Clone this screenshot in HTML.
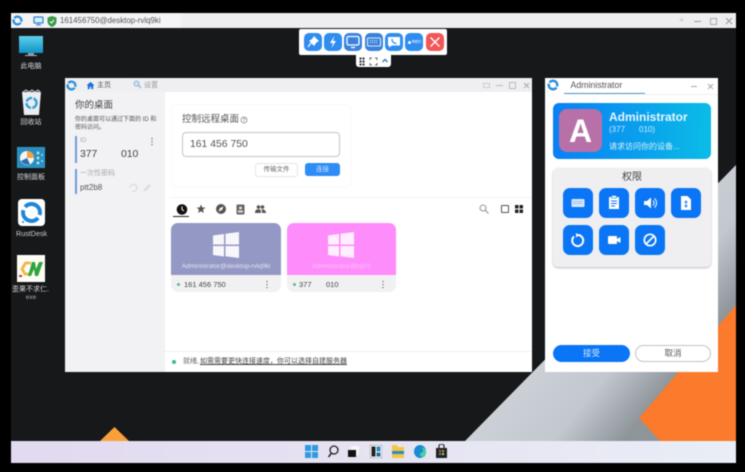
<!DOCTYPE html>
<html><head><meta charset="utf-8">
<style>
html,body{margin:0;padding:0;width:745px;height:472px;overflow:hidden;background:#000}
#r{position:absolute;left:0;top:0;width:745px;height:472px;overflow:hidden;filter:blur(.5px);font-family:"Liberation Sans","Noto Sans CJK SC",sans-serif}
#r div,#r svg,#r span.a{position:absolute}
.t{white-space:nowrap;line-height:1}
.tb{width:18px;height:18px;border-radius:5px;background:#2f8df0;top:33px}
.p{width:30px;height:30px;border-radius:7px;background:#0a76f5}
.lbl{color:#d8d8d8;font-size:7px;width:50px;text-align:center;white-space:nowrap;line-height:1}
</style></head><body><div id="r">
<!-- desktop -->
<div style="left:11px;top:28px;width:725px;height:413px;background:#17181a"></div>
<svg style="left:0;top:0" width="745" height="472">
<defs><linearGradient id="g" gradientUnits="userSpaceOnUse" x1="560" y1="320" x2="670" y2="410"><stop offset="0" stop-color="#ccd2d8"/><stop offset=".5" stop-color="#c2c8ce"/><stop offset=".88" stop-color="#8e959b"/></linearGradient></defs>
<polygon points="465,441 736,165 736,441" fill="url(#g)"/>
<polygon points="736,305 680,370 639,418 660,441 736,441" fill="#fb7a2b"/>
<polygon points="114.500,427 100,441 129,441" fill="#f9a03a"/>
</svg>
<!-- remote titlebar -->
<div style="left:11px;top:13px;width:725px;height:15px;background:#eeeef0"></div>
<div style="left:11px;top:13px;width:170px;height:15px;background:#f4f4f6"></div>
<svg style="left:12px;top:15px" width="11" height="11" viewBox="0 0 24 24"><circle cx="12" cy="12" r="8.500" fill="none" stroke="#2a8fdc" stroke-width="5" stroke-dasharray="24 2.700" transform="rotate(35 12 12)"/></svg>
<svg style="left:33px;top:16px" width="11" height="10" viewBox="0 0 22 20"><rect x="2" y="2" width="18" height="12" rx="1" fill="#dbeefc" stroke="#2f86d8" stroke-width="2.500"/><path d="M11 14v4M6 18h10" stroke="#2f86d8" stroke-width="2"/></svg>
<svg style="left:47px;top:16px" width="10" height="11" viewBox="0 0 20 22"><path d="M10 0l9 3v8c0 5-4 9-9 11-5-2-9-6-9-11V3z" fill="#3d9a4a"/><path d="M6 11l3 3 5-6" stroke="#fff" stroke-width="2" fill="none"/></svg>
<div class="t" style="left:60px;top:17px;font-size:7.900px;color:#555">161456750@desktop-rvlq9ki</div>
<div class="t" style="left:679px;top:16px;font-size:9px;color:#bbb">+</div>
<div style="left:694px;top:21px;width:7px;height:1px;background:#999"></div>
<div style="left:710px;top:18px;width:5px;height:5px;border:1px solid #aaa"></div>
<svg style="left:725px;top:17px" width="8" height="8" viewBox="0 0 8 8"><path d="M1 1l6 6M7 1l-6 6" stroke="#999" stroke-width="1"/></svg>
<!-- toolbar -->
<div style="left:299px;top:29px;width:148px;height:25.500px;background:#fff;border-radius:2px"></div>
<div style="left:356px;top:54px;width:35px;height:13px;background:#fff;border-radius:0 0 3px 3px"></div>
<div class="tb" style="left:303.500px"><svg width="18" height="18" viewBox="0 0 18 18"><path d="M10 4l4 4-2 1-2 3-4-4 3-2zM7 10l-3 4" stroke="#fff" stroke-width="1.200" fill="#fff"/></svg></div>
<div class="tb" style="left:323.500px"><svg width="18" height="18" viewBox="0 0 18 18"><path d="M10.500 3L6 10h3l-1.500 5L12 8H9z" fill="#fff"/></svg></div>
<div class="tb" style="left:344px;background:#3a82dc"><svg width="18" height="18" viewBox="0 0 18 18"><rect x="3" y="3.500" width="12" height="8.500" rx="1.500" fill="#3a82dc" stroke="#fff" stroke-width="1.300"/><path d="M7 14.500h4" stroke="#fff" stroke-width="1.300"/></svg></div>
<div class="tb" style="left:364.500px;background:#3a82dc"><svg width="18" height="18" viewBox="0 0 18 18"><rect x="2.500" y="5" width="13" height="8" rx="1" fill="none" stroke="#dbe8fa" stroke-width="1.100"/><path d="M5 7.500h8M5 9.500h8" stroke="#dbe8fa" stroke-width="1" stroke-dasharray="1 1"/></svg></div>
<div class="tb" style="left:385px"><svg width="18" height="18" viewBox="0 0 18 18"><path d="M3 4h12v8.500H7l-3 2v-2H3z" fill="#fff"/><path d="M7 6c0 3 2 4.500 4.500 4.500" stroke="#2f8df0" stroke-width="1.300" fill="none"/></svg></div>
<div class="tb" style="left:405px;overflow:hidden"><div style="left:3px;top:7.500px;width:3px;height:3px;border-radius:50%;background:#fff"></div><div class="t" style="left:7px;top:6.700px;font-size:4.500px;font-weight:bold;color:#dfeafa">REC</div></div>
<div class="tb" style="left:425.500px;background:#f25656"><svg width="18" height="18" viewBox="0 0 18 18"><path d="M4.500 4.500l9 9M13.500 4.500l-9 9" stroke="#fff" stroke-width="1.300"/></svg></div>
<svg style="left:359px;top:57px" width="30" height="9" viewBox="0 0 30 9"><g fill="#333"><rect x="0.500" y="0.500" width="2" height="2"/><rect x="3.500" y="0.500" width="2" height="2"/><rect x="0.500" y="3.500" width="2" height="2"/><rect x="3.500" y="3.500" width="2" height="2"/><rect x="0.500" y="6.500" width="2" height="2"/><rect x="3.500" y="6.500" width="2" height="2"/></g><path d="M11 3V1h2M16 1h2v2M18 6v2h-2M13 8h-2V6" stroke="#667" stroke-width="1" fill="none"/><path d="M23.500 5l2.500-2.500L28.500 5" stroke="#3a78b8" stroke-width="1.400" fill="none"/></svg>
<!-- desktop icons -->
<svg style="left:19px;top:35px" width="25" height="22" viewBox="0 0 25 22"><defs><linearGradient id="m" x1="0" y1="0" x2="0" y2="1"><stop offset="0" stop-color="#5fd0ee"/><stop offset="1" stop-color="#0f93c6"/></linearGradient></defs><rect x="0" y="1" width="24" height="17" fill="url(#m)"/><rect x="9" y="18" width="6" height="2" fill="#8a9aa4"/><rect x="6" y="20" width="12" height="1" fill="#a8b4bc"/></svg>
<div class="lbl" style="left:6px;top:63px">此电脑</div>
<svg style="left:21px;top:89px" width="21" height="27" viewBox="0 0 21 27"><path d="M1 3h19l-2 23H3z" fill="#e8eef2"/><path d="M2 3l3-2 3 2 3-2 3 2 3-2 2 2" stroke="#ccd" fill="none"/><circle cx="10.500" cy="14" r="5" fill="none" stroke="#3e9ed8" stroke-width="2.500" stroke-dasharray="7 1.500"/></svg>
<div class="lbl" style="left:6px;top:118.500px">回收站</div>
<svg style="left:17px;top:147px" width="28" height="22" viewBox="0 0 28 22"><rect width="28" height="21" fill="#2a9ac8"/><rect x="1" y="1" width="26" height="19" fill="#2a8fc0"/><circle cx="10" cy="11" r="7" fill="#f2f6f8"/><path d="M10 11V4a7 7 0 0 1 7 7z" fill="#f3a23c"/><path d="M10 11l-6 3a7 7 0 0 0 9 3z" fill="#2b6fb0"/><g fill="#a9dcf0"><circle cx="21" cy="6" r="1.500"/><circle cx="21" cy="11" r="1.500"/><circle cx="21" cy="16" r="1.500"/><circle cx="25" cy="8" r="1"/><circle cx="25" cy="14" r="1"/></g></svg>
<div class="lbl" style="left:6px;top:173.500px">控制面板</div>
<div style="left:18px;top:199px;width:27px;height:27px;background:#fff;border-radius:4px"></div>
<svg style="left:18px;top:199px" width="27" height="27" viewBox="0 0 27 27"><circle cx="13.500" cy="13.500" r="8.500" fill="none" stroke="#1f86d8" stroke-width="4" stroke-dasharray="23 3.700" transform="rotate(40 13.500 13.500)"/><circle cx="5" cy="23" r="1" fill="#1f86d8"/></svg>
<div class="t" style="left:16px;top:229.500px;font-size:7.200px;color:#ccc">RustDesk</div>
<div style="left:17px;top:255px;width:28px;height:27px;background:#fdfdf6"></div>
<svg style="left:17px;top:255px" width="28" height="27" viewBox="0 0 28 27"><path d="M14 8H8.500L5 14l3 5h4" fill="none" stroke="#f2b648" stroke-width="2.800"/><path d="M11 21l4-14h3l1 7 3-7h4l-5 14h-3l-1-7-3 7z" fill="#2fa33c"/><rect x="2" y="20" width="3" height="2" fill="#c33"/></svg>
<div class="lbl" style="left:5.500px;top:285.500px">歪果不求仁.</div>
<div class="lbl" style="left:6px;top:295px;font-size:6.500px;color:#aaa">exe</div>
<!-- main window -->
<div style="left:65px;top:78px;width:467px;height:294px;background:#fff"></div>
<div style="left:65px;top:78px;width:467px;height:14px;background:#efeff1"></div>
<div style="left:65px;top:92px;width:100px;height:280px;background:#f2f2f4"></div>
<svg style="left:66px;top:80px" width="11" height="11" viewBox="0 0 24 24"><circle cx="12" cy="12" r="8.500" fill="none" stroke="#2a8fdc" stroke-width="5" stroke-dasharray="24 2.700" transform="rotate(35 12 12)"/></svg>
<svg style="left:86px;top:81px" width="9" height="9" viewBox="0 0 10 10"><path d="M5 1L0.500 5H2v4h2.200V6.500h1.600V9H8V5h1.500z" fill="#1c72d8"/></svg>
<div class="t" style="left:97px;top:81.500px;font-size:7px;color:#555">主页</div>
<svg style="left:133px;top:80px" width="9" height="9" viewBox="0 0 10 10"><circle cx="4" cy="4" r="2.800" fill="#cfe0f2" stroke="#8cb4dc"/><path d="M6 6l3 3" stroke="#9bb7d6" stroke-width="1.500"/></svg>
<div class="t" style="left:144px;top:81.500px;font-size:7px;color:#999">设置</div>
<div style="left:483px;top:83px;width:5px;height:3px;border:1px solid #ccc"></div>
<div style="left:496px;top:85px;width:7px;height:1px;background:#bbb"></div>
<div style="left:509px;top:82px;width:5px;height:5px;border:1px solid #bbb"></div>
<svg style="left:523px;top:81.500px" width="7" height="7" viewBox="0 0 7 7"><path d="M1 1l5 5M6 1L1 6" stroke="#aaa"/></svg>
<!-- sidebar -->
<div class="t" style="left:75px;top:101px;font-size:9.500px;color:#444">你的桌面</div>
<div class="t" style="left:75px;top:117px;font-size:6px;color:#555">你的桌面可以通过下面的 ID 和</div>
<div class="t" style="left:75px;top:125px;font-size:6px;color:#555">密码访问。</div>
<div style="left:75px;top:136px;width:1.500px;height:27px;background:#6d9bdc"></div>
<div class="t" style="left:80px;top:137.500px;font-size:6.500px;color:#aaa">ID</div>
<svg style="left:150px;top:137px" width="4" height="9"><g fill="#777"><circle cx="2" cy="1.500" r=".8"/><circle cx="2" cy="4.500" r=".8"/><circle cx="2" cy="7.500" r=".8"/></g></svg>
<div class="t" style="left:80px;top:150px;font-size:10.400px;color:#444">377</div>
<div class="t" style="left:121px;top:150px;font-size:10.400px;color:#444">010</div>
<div style="left:75px;top:169px;width:1.500px;height:25px;background:#6d9bdc"></div>
<div class="t" style="left:80px;top:170px;font-size:7px;color:#aaa">一次性密码</div>
<div class="t" style="left:80px;top:184px;font-size:8px;color:#555">ptt2b8</div>
<svg style="left:128px;top:183px" width="26" height="10" viewBox="0 0 26 10"><path d="M2 5a3.500 3.500 0 1 1 2 3" fill="none" stroke="#dcdcdc" stroke-width="1.200"/><path d="M15 9l1-3 5-5 2 2-5 5z" fill="#dedede"/></svg>
<!-- remote control card -->
<div style="left:171px;top:104px;width:178px;height:82px;border:1px solid #f8f8f8;border-radius:5px"></div>
<div class="t" style="left:182px;top:114.500px;font-size:9.500px;color:#555">控制远程桌面</div>
<svg style="left:240px;top:115.500px" width="8" height="8" viewBox="0 0 8 8"><circle cx="4" cy="4" r="3" fill="none" stroke="#888" stroke-width=".8"/><circle cx="4" cy="5.500" r=".5" fill="#888"/><path d="M3 3a1 1 0 1 1 1 1v.5" fill="none" stroke="#888" stroke-width=".6"/></svg>
<div style="left:181.500px;top:132px;width:156.500px;height:23px;border:1px solid #c4c4c4;border-radius:4px"></div>
<div class="t" style="left:190px;top:139.500px;font-size:10.400px;color:#555">161 456 750</div>
<div class="t" style="left:255px;top:163px;width:41px;height:12px;border:1px solid #e4e4e4;border-radius:3px;font-size:6.500px;line-height:12px;text-align:center;color:#666">传输文件</div>
<div class="t" style="left:305px;top:163px;width:35px;height:13px;background:#2f8cf5;border-radius:3px;font-size:6.500px;line-height:13px;text-align:center;color:#d8e8ff">连接</div>
<div style="left:170px;top:197px;width:362px;height:1px;background:#f5f5f5"></div>
<!-- tab icons -->
<svg style="left:176px;top:204px" width="12" height="11" viewBox="0 0 12 11"><circle cx="6" cy="5.500" r="5.300" fill="#111"/><path d="M6 2.500v3l2 1.500" stroke="#fff" stroke-width="1" fill="none"/></svg>
<div style="left:173px;top:216px;width:16px;height:1px;background:#222"></div>
<svg style="left:196px;top:204px" width="10" height="10" viewBox="0 0 10 10"><path d="M5 .5l1.300 3h3.200L7 5.600 7.900 9 5 7.200 2.100 9 3 5.600.5 3.500h3.200z" fill="#555"/></svg>
<svg style="left:216px;top:204px" width="10" height="10" viewBox="0 0 10 10"><circle cx="5" cy="5" r="5" fill="#555"/><path d="M7.500 2.500L6 6 2.500 7.500 4 4z" fill="#fff"/></svg>
<svg style="left:236px;top:203.500px" width="9" height="11" viewBox="0 0 9 11"><rect x=".5" y=".5" width="8" height="10" rx="1" fill="#666"/><circle cx="4.500" cy="4" r="1.500" fill="#ddd"/><rect x="2" y="6.500" width="5" height="2" fill="#ddd"/></svg>
<svg style="left:255px;top:205px" width="11" height="8" viewBox="0 0 11 8"><circle cx="3.500" cy="2" r="1.800" fill="#555"/><circle cx="7.500" cy="2" r="1.800" fill="#555"/><path d="M0 8c0-3 1.500-3.800 3.500-3.800S6 5 6 8zM6.500 4.200c2 0 4.500.8 4.500 3.800H7c0-1.500-.2-3-.5-3.800z" fill="#555"/></svg>
<!-- right tools -->
<svg style="left:479px;top:204px" width="10" height="10" viewBox="0 0 10 10"><circle cx="4" cy="4" r="3" fill="none" stroke="#999" stroke-width="1.100"/><path d="M6.300 6.300L9.500 9.500" stroke="#999" stroke-width="1.200"/></svg>
<div style="left:501px;top:205px;width:6px;height:6px;border:1px solid #555;border-radius:1px"></div>
<svg style="left:515px;top:205px" width="8" height="8"><g fill="#222"><rect width="3.500" height="3.500"/><rect x="4.500" width="3.500" height="3.500"/><rect y="4.500" width="3.500" height="3.500"/><rect x="4.500" y="4.500" width="3.500" height="3.500"/></g></svg>
<!-- peer cards -->
<div style="left:171px;top:223px;width:110px;height:69px;border-radius:7px;background:#f1f1f3;overflow:hidden"><div style="left:0;top:0;width:110px;height:52px;background:#9498c4"></div></div>
<div style="left:287px;top:223px;width:109px;height:69px;border-radius:7px;background:#f1f1f3;overflow:hidden"><div style="left:0;top:0;width:109px;height:52px;background:#fe8cfb"></div></div>
<svg style="left:213px;top:232px" width="26" height="26" viewBox="0 0 26 26"><path d="M0 3.500l11-1.500v10.500H0zM12.500 1.800L26 0v12.500H12.500zM0 14h11v10.500L0 23zM12.500 14H26v12l-13.500-1.800z" fill="#fff" fill-opacity=".92"/></svg>
<svg style="left:328px;top:232px" width="26" height="26" viewBox="0 0 26 26"><path d="M0 3.500l11-1.500v10.500H0zM12.500 1.800L26 0v12.500H12.500zM0 14h11v10.500L0 23zM12.500 14H26v12l-13.500-1.800z" fill="#fff" fill-opacity=".85"/></svg>
<div class="t" style="left:171px;top:264px;width:110px;text-align:center;font-size:6.500px;color:#e2e4f4">Administrator@desktop-rvlq9ki</div>
<div class="t" style="left:287px;top:264px;width:109px;text-align:center;font-size:6.500px;color:#ffc0fc">Administrator@pp01</div>
<div style="left:177px;top:282.500px;width:3px;height:3px;border-radius:50%;background:#5ab98a"></div>
<div class="t" style="left:184px;top:280.500px;font-size:7.500px;color:#444">161 456 750</div>
<svg style="left:265px;top:280px" width="4" height="9"><g fill="#777"><circle cx="2" cy="1.500" r=".7"/><circle cx="2" cy="4.500" r=".7"/><circle cx="2" cy="7.500" r=".7"/></g></svg>
<div style="left:292.500px;top:282.500px;width:3px;height:3px;border-radius:50%;background:#5ab98a"></div>
<div class="t" style="left:299px;top:280.500px;font-size:7.500px;color:#444">377</div>
<div class="t" style="left:326px;top:280.500px;font-size:7.500px;color:#444">010</div>
<svg style="left:381px;top:280px" width="4" height="9"><g fill="#777"><circle cx="2" cy="1.500" r=".7"/><circle cx="2" cy="4.500" r=".7"/><circle cx="2" cy="7.500" r=".7"/></g></svg>
<!-- status -->
<div style="left:165px;top:351px;width:367px;height:1px;background:#efeff1"></div>
<div style="left:172px;top:360px;width:4px;height:4px;border-radius:50%;background:#3cb98a"></div>
<div class="t" style="left:183px;top:358px;font-size:7px;color:#666">就绪,</div>
<div class="t" style="left:200px;top:358px;font-size:7px;color:#444;text-decoration:underline">如需需要更快连接速度，你可以选择自建服务器</div>
<!-- CM window -->
<div style="left:545px;top:78px;width:173px;height:294px;background:#fff"></div>
<svg style="left:547px;top:79px" width="12" height="12" viewBox="0 0 24 24"><circle cx="12" cy="12" r="8.500" fill="none" stroke="#2a8fdc" stroke-width="5" stroke-dasharray="24 2.700" transform="rotate(35 12 12)"/></svg>
<div class="t" style="left:570.500px;top:81px;font-size:8.800px;color:#555">Administrator</div>
<div style="left:564px;top:93px;width:81px;height:1px;background:#4a8fc4"></div>
<div style="left:645px;top:93.500px;width:73px;height:1px;background:#f0f0f0"></div>
<div style="left:691px;top:86px;width:6px;height:1px;background:#aaa"></div>
<svg style="left:707px;top:83px" width="7" height="7" viewBox="0 0 7 7"><path d="M1 1l5 5M6 1L1 6" stroke="#aaa"/></svg>
<div style="left:553px;top:103px;width:158px;height:56px;border-radius:6px;background:linear-gradient(90deg,#0a7ff5,#0bbce6)"></div>
<div class="t" style="left:559px;top:109px;width:43px;height:43px;border-radius:8px;background:#b871a8;color:#fff;font-weight:bold;font-size:32px;line-height:44px;text-align:center">A</div>
<div class="t" style="left:609px;top:111px;font-size:12px;font-weight:bold;color:#e6f6ff">Administrator</div>
<div class="t" style="left:609px;top:126px;font-size:8px;color:#cdeafc">(377</div>
<div class="t" style="left:639px;top:126px;font-size:8px;color:#cdeafc">010)</div>
<div class="t" style="left:609px;top:143px;font-size:8px;color:#d8f0fc">请求访问你的设备...</div>
<div style="left:553px;top:168px;width:158px;height:99px;border-radius:5px;background:#efeff2;box-shadow:0 1px 2px #bbb"></div>
<div class="t" style="left:553px;top:172.500px;width:158px;text-align:center;font-size:10px;color:#444">权限</div>
<div class="p" style="left:562.500px;top:188px"><svg width="30" height="30" viewBox="0 0 30 30"><rect x="8.500" y="11" width="13" height="8" rx="1" fill="#d8e8ff"/><path d="M10 13.500h10M10 15.500h10" stroke="#5f9eea" stroke-width="1" stroke-dasharray="1 1"/></svg></div>
<div class="p" style="left:598.800px;top:188px"><svg width="30" height="30" viewBox="0 0 30 30"><path d="M10 9h10v12H10z" fill="#fff"/><rect x="12.500" y="7.500" width="5" height="2.500" fill="#fff" stroke="#0a76f5" stroke-width=".6"/><path d="M12 13h6M12 15.500h6M12 18h4" stroke="#0a76f5"/></svg></div>
<div class="p" style="left:635px;top:188px"><svg width="30" height="30" viewBox="0 0 30 30"><path d="M9 13h3l4-3.500v11L12 17H9z" fill="#fff"/><path d="M18 12.500a3.500 3.500 0 0 1 0 5M19.500 10.500a6 6 0 0 1 0 9" stroke="#fff" fill="none"/></svg></div>
<div class="p" style="left:671.200px;top:188px"><svg width="30" height="30" viewBox="0 0 30 30"><path d="M10 8h6.500L20 11.500V22H10z" fill="#fff"/><path d="M15 13v6M13.500 14.500L15 13l1.500 1.500M13.500 17.500L15 19l1.500-1.500" stroke="#0a76f5" fill="none" stroke-width=".8"/></svg></div>
<div class="p" style="left:562.500px;top:224.500px"><svg width="30" height="30" viewBox="0 0 30 30"><path d="M11 11.500a5.500 5.500 0 1 0 3-1.400" fill="none" stroke="#fff" stroke-width="2"/><path d="M13 8l3 2-3 2.500z" fill="#fff"/></svg></div>
<div class="p" style="left:598.800px;top:224.500px"><svg width="30" height="30" viewBox="0 0 30 30"><rect x="9" y="11" width="9" height="8" rx="1" fill="#fff"/><path d="M18 14l3.500-2v6L18 16z" fill="#fff"/></svg></div>
<div class="p" style="left:635px;top:224.500px"><svg width="30" height="30" viewBox="0 0 30 30"><circle cx="15" cy="15" r="5.700" fill="none" stroke="#fff" stroke-width="1.700"/><path d="M11 19l8-8" stroke="#fff" stroke-width="1.700"/></svg></div>
<div class="t" style="left:553px;top:345px;width:77px;height:17px;background:#0a76f5;border-radius:9px;font-size:8.500px;line-height:17px;text-align:center;color:#d8e8ff">接受</div>
<div class="t" style="left:635px;top:345px;width:74px;height:15px;border:1px solid #c4c4c4;border-radius:9px;background:#fff;font-size:8.500px;line-height:15px;text-align:center;color:#555">取消</div>
<!-- taskbar -->
<div style="left:11px;top:441px;width:725px;height:22px;background:linear-gradient(90deg,#e2daf0,#e6e2f2 45%,#e9eef6)"></div>
<svg style="left:305px;top:445px" width="13" height="13"><g fill="#2f9ae0"><rect width="6" height="6"/><rect x="7" width="6" height="6"/><rect y="7" width="6" height="6"/><rect x="7" y="7" width="6" height="6"/></g></svg>
<svg style="left:327px;top:445px" width="12" height="13" viewBox="0 0 12 13"><circle cx="7" cy="5" r="4" fill="none" stroke="#222" stroke-width="1.300"/><path d="M4.500 8L1.500 12" stroke="#222" stroke-width="1.500"/></svg>
<svg style="left:348px;top:446px" width="11" height="11"><rect x="3" width="8" height="9" fill="#f5f5f5"/><rect y="4" width="8" height="7" fill="#111"/></svg>
<svg style="left:370px;top:445px" width="12" height="13"><rect width="12" height="13" rx="1" fill="#fff" stroke="#333" stroke-width=".5"/><rect x="1.500" y="1.500" width="4" height="10" fill="#222"/><rect x="6.500" y="1.500" width="4" height="5" fill="#2b8cc4"/><rect x="6.500" y="7.500" width="4" height="4" fill="#1a6f98"/></svg>
<svg style="left:392px;top:445px" width="12" height="13"><path d="M0 0h5l1 2h6v11H0z" fill="#f5c542"/><rect y="6" width="12" height="3" fill="#2b8cc4"/></svg>
<svg style="left:414px;top:445px" width="12" height="13" viewBox="0 0 12 13"><ellipse cx="6" cy="6.500" rx="6" ry="6.500" fill="#1b8ad0"/><path d="M12 7c0-3-2.500-5-5-4 2 .5 2.500 2 2 3.500-.5 1.500-3 1-3 3 0 1.500 2 3 4 2.500 1.500-1 2-3 2-5z" fill="#44d2a6"/></svg>
<svg style="left:436px;top:444px" width="11" height="14" viewBox="0 0 11 14"><rect y="4" width="11" height="10" fill="#222"/><path d="M3 4V2a2.500 2 0 0 1 5 0v2" fill="none" stroke="#222" stroke-width="1.200"/><g><rect x="3" y="6" width="2" height="2" fill="#e8542e"/><rect x="6" y="6" width="2" height="2" fill="#7eb83c"/><rect x="3" y="9" width="2" height="2" fill="#2f9ae0"/><rect x="6" y="9" width="2" height="2" fill="#f5c542"/></g></svg>
</div></body></html>
